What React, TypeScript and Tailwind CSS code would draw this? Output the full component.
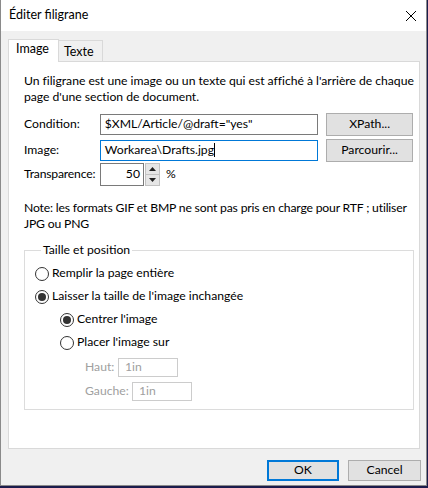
import React from 'react';

const font = { fontFamily: 'Lato, "Noto Sans", sans-serif' };

const Radio: React.FC<{ checked?: boolean; label: string }> = ({ checked, label }) => (
  <label className="flex items-center gap-[3px] h-[23px]">
    <span className="w-[14px] h-[14px] rounded-full border border-[#333] bg-white flex items-center justify-center">
      {checked && <span className="w-[8px] h-[8px] rounded-full bg-[#333]" />}
    </span>
    <span>{label}</span>
  </label>
);

const Button: React.FC<{ label: string; primary?: boolean; className?: string }> = ({ label, primary, className }) => (
  <button
    className={
      'bg-[#e1e1e1] text-black flex items-center justify-center ' +
      (primary ? 'border-2 border-[#0078d7] ' : 'border border-[#adadad] ') +
      (className || '')
    }
  >
    {label}
  </button>
);

export default function App() {
  return (
    <div className="w-[428px] h-[488px] bg-[#1c1c4c] overflow-hidden" style={font}>
      <div className="w-[427px] h-[486px] bg-[#f0f0f0] border border-[#8a8a8a] border-t-0 flex flex-col text-[12.2px] text-black leading-none">
        {/* Title bar */}
        <div className="h-[31px] bg-white flex items-center justify-between pl-[8px] pr-[9px] shrink-0">
          <span className="text-[12.5px]">Éditer filigrane</span>
          <svg width="12" height="12" viewBox="0 0 12 12">
            <path d="M1 1 L11 11 M11 1 L1 11" stroke="#000" strokeWidth="1" />
          </svg>
        </div>

        {/* Tabs */}
        <div className="px-[7px] pt-[7px] flex flex-col">
          <div className="flex items-end h-[23px]">
            <div className="h-[23px] w-[51px] bg-white border border-[#d9d9d9] border-b-0 flex items-center pl-[7px] relative z-10 -mb-px pb-[3px] text-[12.5px]">
              Image
            </div>
            <div className="h-[21px] w-[44px] bg-[#f0f0f0] border border-[#d9d9d9] border-l-0 border-b-0 flex items-center pl-[5px] pt-[2px] text-[12.5px]">
              Texte
            </div>
          </div>

          {/* Panel */}
          <div className="h-[388px] w-[412px] bg-white border border-[#d9d9d9] pl-[15px] pr-[6px] pt-[11px]">
            <p className="leading-[16px] whitespace-nowrap tracking-[-0.03px]">
              Un filigrane est une image ou un texte qui est affiché à l'arrière de chaque
              <br />
              page d'une section de document.
            </p>

            <div className="mt-[8px] flex items-center h-[22px]">
              <span className="w-[76px]">Condition:</span>
              <div className="w-[219px] h-[21px] border border-[#7a7a7a] flex items-center px-[4px]">
                $XML/Article/@draft="yes"
              </div>
              <Button label="XPath..." className="ml-[8px] w-[87px] h-[23px]" />
            </div>

            <div className="mt-[4px] flex items-center h-[22px]">
              <span className="w-[76px]">Image:</span>
              <div className="w-[219px] h-[21px] border border-[#0078d7] flex items-center px-[4px]">
                Workarea\Drafts.jpg<span className="w-px h-[14px] bg-black" />
              </div>
              <Button label="Parcourir..." className="ml-[8px] w-[87px] h-[23px]" />
            </div>

            <div className="mt-[2px] flex items-center h-[23px]">
              <span className="w-[76px] tracking-[-0.2px]">Transparence:</span>
              <div className="w-[44px] h-[23px] border border-[#7a7a7a] flex items-center justify-end pr-[3px]">
                50
              </div>
              <div className="w-[15px] h-[23px] flex flex-col ml-px">
                <div className="flex-1 bg-[#e6e6e6] border border-[#c2c2c2] flex items-center justify-center">
                  <svg width="7" height="4" viewBox="0 0 7 4"><path d="M0 4 L3.5 0 L7 4 Z" fill="#222" /></svg>
                </div>
                <div className="flex-1 bg-[#e6e6e6] border border-[#c2c2c2] border-t-0 flex items-center justify-center">
                  <svg width="7" height="4" viewBox="0 0 7 4"><path d="M0 0 L3.5 4 L7 0 Z" fill="#222" /></svg>
                </div>
              </div>
              <span className="ml-[6px]">%</span>
            </div>

            <p className="mt-[14px] leading-[16px] whitespace-nowrap tracking-[-0.18px]">
              Note: les formats GIF et BMP ne sont pas pris en charge pour RTF ; utiliser
              <br />
              JPG ou PNG
            </p>

            {/* Group box */}
            <fieldset className="mt-[10px] w-[390px] h-[168px] border border-[#dcdcdc] pl-[10px] pt-[4px]">
              <legend className="px-[2px] ml-[6px] leading-[16px]">Taille et position</legend>
              <Radio label="Remplir la page entière" />
              <Radio checked label="Laisser la taille de l'image inchangée" />
              <div className="pl-[25px]">
                <Radio checked label="Centrer l'image" />
                <Radio label="Placer l'image sur" />
                <div className="pl-[25px] text-[#a0a0a0]">
                  <div className="flex items-center h-[24px] mt-[1px]">
                    <span className="w-[33px]">Haut:</span>
                    <div className="w-[60px] h-[19px] border border-[#cccccc] flex items-center px-[6px]">1in</div>
                  </div>
                  <div className="flex items-center h-[24px]">
                    <span className="w-[47px]">Gauche:</span>
                    <div className="w-[60px] h-[19px] border border-[#cccccc] flex items-center px-[6px]">1in</div>
                  </div>
                </div>
              </div>
            </fieldset>
          </div>
        </div>

        {/* Footer */}
        <div className="flex justify-end gap-[9px] pr-[5px] mt-[11px]">
          <Button primary label="OK" className="w-[72px] h-[21px]" />
          <Button label="Cancel" className="w-[73px] h-[21px]" />
        </div>
      </div>
    </div>
  );
}
